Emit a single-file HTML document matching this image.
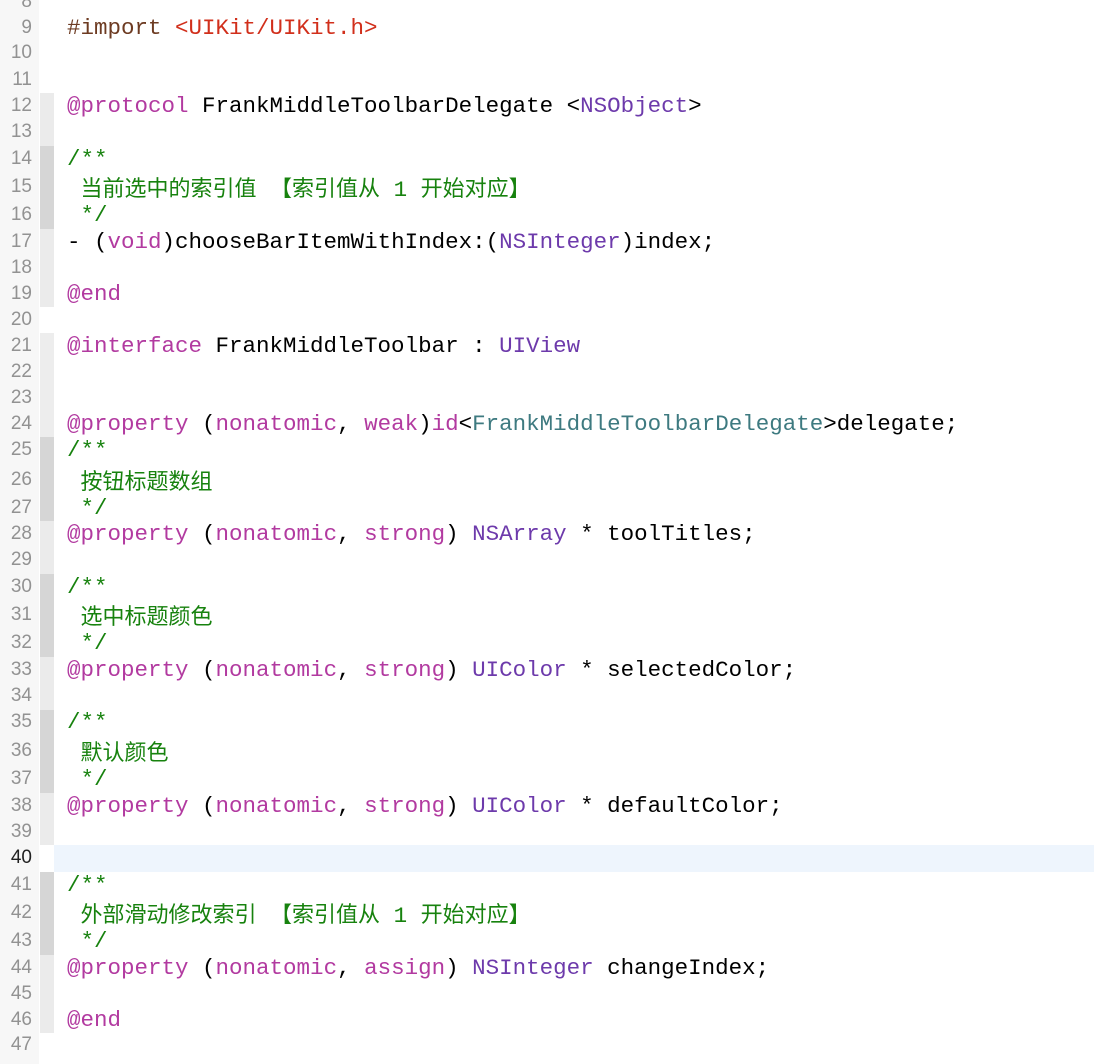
<!DOCTYPE html>
<html><head><meta charset="utf-8"><style>
html,body{margin:0;padding:0;background:#fff;width:1094px;height:1064px;overflow:hidden;position:relative}
.g{position:absolute;left:0;top:0;width:39px;height:1064px;background:#f7f7f7}
.r{position:absolute;left:40px;width:14px}
.l{position:absolute;left:0;height:26px;line-height:26px;white-space:pre;font-family:"Liberation Mono","Noto Sans CJK SC",monospace;font-size:22.5px;color:#000}
.n{position:absolute;left:0;width:32px;text-align:right;font-family:"Liberation Sans",sans-serif;font-size:19px;color:#929292}
.t{position:absolute;left:67px}
.k{color:#b23aa0}.ty{color:#6d3aab}.c{color:#17820e}.p{color:#6d3b22}.s{color:#d12f1b}.tl{color:#3e7a80}
.cj{font-family:"Noto Sans CJK SC",sans-serif;font-size:22px}
</style></head><body>
<div class="g"></div>
<div class="r" style="top:93px;height:54px;background:#ebebeb"></div>
<div class="r" style="top:146px;height:83px;background:#d6d6d6"></div>
<div class="r" style="top:229px;height:78px;background:#ebebeb"></div>
<div class="r" style="top:333px;height:104px;background:#ededed"></div>
<div class="r" style="top:437px;height:84px;background:#d6d6d6"></div>
<div class="r" style="top:521px;height:53px;background:#ebebeb"></div>
<div class="r" style="top:574px;height:83px;background:#d6d6d6"></div>
<div class="r" style="top:657px;height:53px;background:#ebebeb"></div>
<div class="r" style="top:710px;height:83px;background:#d6d6d6"></div>
<div class="r" style="top:793px;height:52px;background:#ebebeb"></div>
<div class="r" style="top:872px;height:83px;background:#d6d6d6"></div>
<div class="r" style="top:955px;height:78px;background:#ebebeb"></div>
<div style="position:absolute;left:54px;top:845px;width:1040px;height:27px;background:#eef5fd"></div>

<div class="l" style="top:-11px"><span class="n">8</span></div>
<div class="l" style="top:15px"><span class="n">9</span><span class="t"><span class="p">#import </span><span class="s">&lt;UIKit/UIKit.h&gt;</span></span></div>
<div class="l" style="top:40px"><span class="n">10</span></div>
<div class="l" style="top:67px"><span class="n">11</span></div>
<div class="l" style="top:93px"><span class="n">12</span><span class="t"><span class="k">@protocol</span> FrankMiddleToolbarDelegate &lt;<span class="ty">NSObject</span>&gt;</span></div>
<div class="l" style="top:119px"><span class="n">13</span></div>
<div class="l" style="top:146px"><span class="n">14</span><span class="t c">/**</span></div>
<div class="l" style="top:174px"><span class="n">15</span><span class="t c"> <span class="cj">当前选中的索引值</span> <span class="cj">【索引值从</span> 1 <span class="cj">开始对应】</span></span></div>
<div class="l" style="top:202px"><span class="n">16</span><span class="t c"> */</span></div>
<div class="l" style="top:229px"><span class="n">17</span><span class="t">- (<span class="k">void</span>)chooseBarItemWithIndex:(<span class="ty">NSInteger</span>)index;</span></div>
<div class="l" style="top:255px"><span class="n">18</span></div>
<div class="l" style="top:281px"><span class="n">19</span><span class="t k">@end</span></div>
<div class="l" style="top:307px"><span class="n">20</span></div>
<div class="l" style="top:333px"><span class="n">21</span><span class="t"><span class="k">@interface</span> FrankMiddleToolbar : <span class="ty">UIView</span></span></div>
<div class="l" style="top:359px"><span class="n">22</span></div>
<div class="l" style="top:385px"><span class="n">23</span></div>
<div class="l" style="top:411px"><span class="n">24</span><span class="t"><span class="k">@property</span> (<span class="k">nonatomic</span>, <span class="k">weak</span>)<span class="k">id</span>&lt;<span class="tl">FrankMiddleToolbarDelegate</span>&gt;delegate;</span></div>
<div class="l" style="top:437px"><span class="n">25</span><span class="t c">/**</span></div>
<div class="l" style="top:467px"><span class="n">26</span><span class="t c"> <span class="cj">按钮标题数组</span></span></div>
<div class="l" style="top:495px"><span class="n">27</span><span class="t c"> */</span></div>
<div class="l" style="top:521px"><span class="n">28</span><span class="t"><span class="k">@property</span> (<span class="k">nonatomic</span>, <span class="k">strong</span>) <span class="ty">NSArray</span> * toolTitles;</span></div>
<div class="l" style="top:547px"><span class="n">29</span></div>
<div class="l" style="top:574px"><span class="n">30</span><span class="t c">/**</span></div>
<div class="l" style="top:602px"><span class="n">31</span><span class="t c"> <span class="cj">选中标题颜色</span></span></div>
<div class="l" style="top:630px"><span class="n">32</span><span class="t c"> */</span></div>
<div class="l" style="top:657px"><span class="n">33</span><span class="t"><span class="k">@property</span> (<span class="k">nonatomic</span>, <span class="k">strong</span>) <span class="ty">UIColor</span> * selectedColor;</span></div>
<div class="l" style="top:683px"><span class="n">34</span></div>
<div class="l" style="top:709px"><span class="n">35</span><span class="t c">/**</span></div>
<div class="l" style="top:738px"><span class="n">36</span><span class="t c"> <span class="cj">默认颜色</span></span></div>
<div class="l" style="top:766px"><span class="n">37</span><span class="t c"> */</span></div>
<div class="l" style="top:793px"><span class="n">38</span><span class="t"><span class="k">@property</span> (<span class="k">nonatomic</span>, <span class="k">strong</span>) <span class="ty">UIColor</span> * defaultColor;</span></div>
<div class="l" style="top:819px"><span class="n">39</span></div>
<div class="l" style="top:845px"><span class="n" style="color:#222">40</span></div>
<div class="l" style="top:872px"><span class="n">41</span><span class="t c">/**</span></div>
<div class="l" style="top:900px"><span class="n">42</span><span class="t c"> <span class="cj">外部滑动修改索引</span> <span class="cj">【索引值从</span> 1 <span class="cj">开始对应】</span></span></div>
<div class="l" style="top:928px"><span class="n">43</span><span class="t c"> */</span></div>
<div class="l" style="top:955px"><span class="n">44</span><span class="t"><span class="k">@property</span> (<span class="k">nonatomic</span>, <span class="k">assign</span>) <span class="ty">NSInteger</span> changeIndex;</span></div>
<div class="l" style="top:981px"><span class="n">45</span></div>
<div class="l" style="top:1007px"><span class="n">46</span><span class="t k">@end</span></div>
<div class="l" style="top:1032px"><span class="n">47</span></div>
</body></html>
